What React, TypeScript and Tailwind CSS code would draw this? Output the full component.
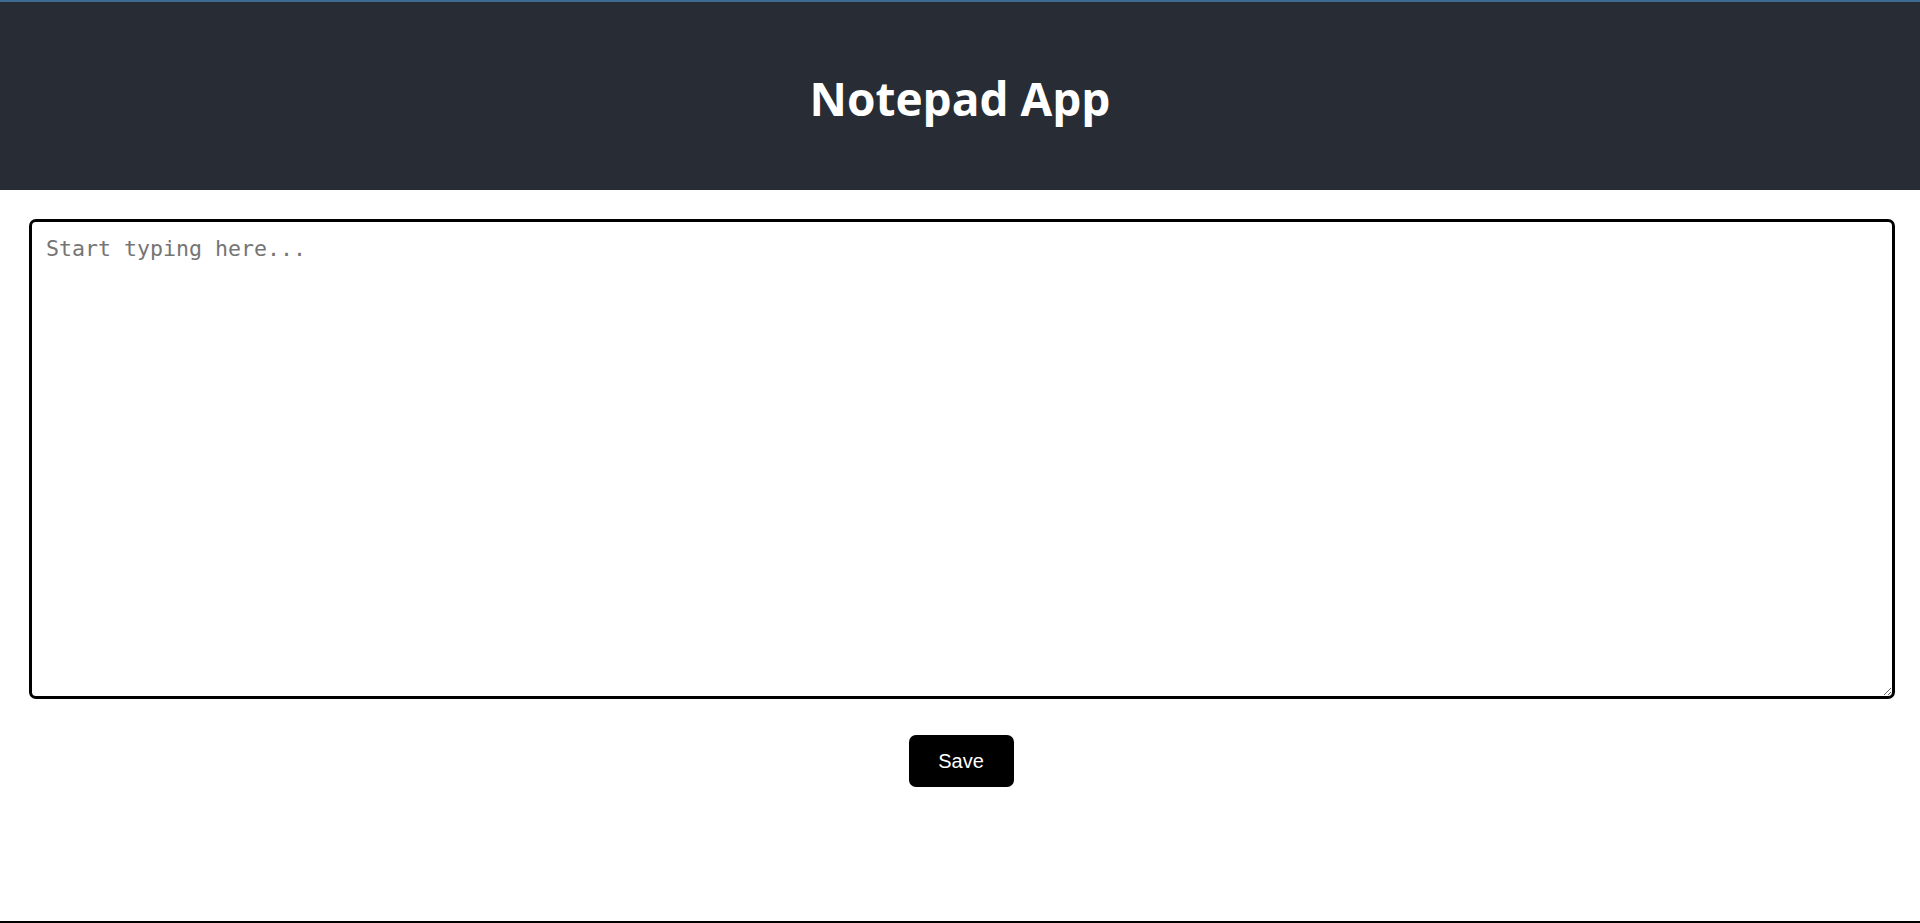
import React, { useState } from 'react';

export default function App() {
  const [text, setText] = useState('');

  return (
    <div className="min-h-[923px] bg-white border-b-2 border-black flex flex-col">
      <header className="h-[190px] bg-[#282c34] border-t-2 border-[#3e6b93] flex items-center justify-center shrink-0">
        <h1 className="text-[46px] font-bold text-white font-['Open_Sans',sans-serif] leading-none mt-[3px]">
          Notepad App
        </h1>
      </header>

      <main className="flex flex-col items-center pt-[29px]">
        <textarea
          value={text}
          onChange={(e) => setText(e.target.value)}
          placeholder="Start typing here..."
          className="block w-[1866px] h-[480px] ml-[4px] border-[3px] border-black rounded-[7px] px-[14px] py-[13px] text-[21.6px] leading-[27px] font-['DejaVu_Sans_Mono',monospace] text-black placeholder:text-[#757575] outline-none"
        />
        <button
          type="button"
          className="mt-[36px] ml-[2px] w-[105px] h-[52px] bg-black text-white rounded-[7px] text-[20px] font-['Liberation_Sans',Arial,sans-serif]"
        >
          Save
        </button>
      </main>
    </div>
  );
}
